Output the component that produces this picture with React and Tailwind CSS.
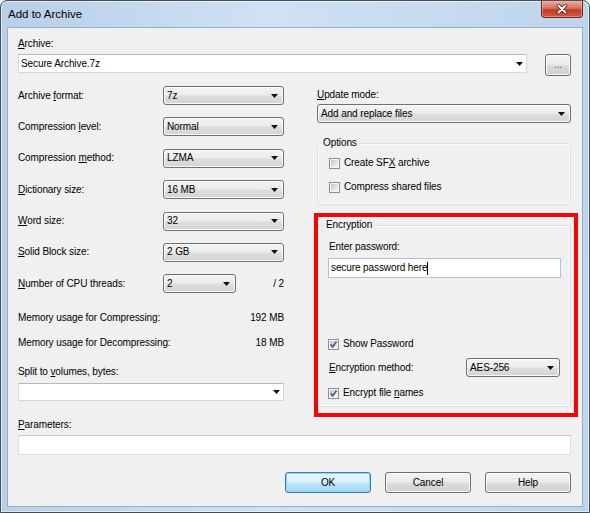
import React from "react";

const Arrow = () => (
  <svg width="7" height="4" viewBox="0 0 7 4" className="shrink-0">
    <path d="M0 0h7L3.5 4z" fill="#111" />
  </svg>
);

const U = ({ children }) => <span className="underline underline-offset-[1px]">{children}</span>;

const Select = ({ value, className = "" }) => (
  <div
    className={`flex items-center justify-between h-[19px] pl-[3px] pr-[5px] rounded-[3px] border border-[#707070] bg-[linear-gradient(#f3f3f3,#ececec_48%,#dedede_52%,#d3d3d3)] shadow-[inset_0_0_0_1px_#fafafa] ${className}`}
  >
    <span>{value}</span>
    <Arrow />
  </div>
);

const EditCombo = ({ value, className = "" }) => (
  <div
    className={`flex items-center justify-between pl-[2px] pr-[3px] bg-white border border-[#d5d8de] border-t-[#b5b9c1] ${className}`}
  >
    <span>{value}</span>
    <Arrow />
  </div>
);

const Button = ({ children, primary, className = "" }) => (
  <div
    className={
      primary
        ? `flex items-center justify-center rounded-[3px] border border-[#3c7fb1] bg-[linear-gradient(#eaf6fd,#d9f0fc_48%,#bee6fd_52%,#a7d9f5)] shadow-[inset_0_0_0_1px_#8fd3f3] ${className}`
        : `flex items-center justify-center rounded-[3px] border border-[#707070] bg-[linear-gradient(#f3f3f3,#ebebeb_48%,#dddddd_52%,#cfcfcf)] shadow-[inset_0_0_0_1px_#fbfbfb] ${className}`
    }
  >
    {children}
  </div>
);

const Check = ({ checked, children }) => (
  <div className="flex items-center gap-[4px] h-[14px]">
    <div className="relative w-[11px] h-[11px] border border-[#8e8f8f] bg-[#f6f6f6] p-[1px]">
      <div className="w-full h-full bg-[linear-gradient(135deg,#c3c8cf,#f4f4f4)]" />
      {checked && (
        <svg className="absolute left-0 top-0" width="9" height="9" viewBox="0 0 9 9">
          <path d="M1.6 4.3 3.6 6.8 7.6 1.4" fill="none" stroke="#4c5f88" strokeWidth="1.7" />
        </svg>
      )}
    </div>
    <span>{children}</span>
  </div>
);

const Group = ({ title, titleLeft, className = "", children }) => (
  <div className={`relative rounded-[3px] border border-[#d5dfe5] shadow-[inset_0_0_0_1px_#fbfbfb] ${className}`}>
    <span className={`absolute -top-[8px] ${titleLeft} px-[2px] bg-[#f0f0f0] leading-[14px]`}>{title}</span>
    {children}
  </div>
);

const rows = [
  [<>Archive <U>f</U>ormat:</>, "7z"],
  [<>Compression <U>l</U>evel:</>, "Normal"],
  [<>Compression <U>m</U>ethod:</>, "LZMA"],
  [<><U>D</U>ictionary size:</>, "16 MB"],
  [<><U>W</U>ord size:</>, "32"],
  [<><U>S</U>olid Block size:</>, "2 GB"],
];

export default function App() {
  return (
    <div className="w-[590px] h-[514px] bg-white font-['Liberation_Sans',Arial,sans-serif] text-[10px] leading-[14px] tracking-[-0.1px] text-black">
      <div className="relative flex flex-col w-[590px] h-[513px] rounded-t-[7px] border border-[#4a4f54] bg-[linear-gradient(90deg,#b8cfe8,#cfe2f4_45%,#c6dbef_75%,#bdd4ec)] shadow-[inset_0_0_0_1px_rgba(255,255,255,0.55)]">
        {/* title bar */}
        <div className="h-[26px] pl-[7px] flex items-center text-[11.5px] tracking-normal">Add to Archive</div>
        <div className="absolute top-0 right-[6px] w-[42px] h-[17px] flex items-center justify-center rounded-b-[4px] border border-t-0 border-[#6b2a22] bg-[linear-gradient(#e9ab9e,#d8735e_45%,#c2362a_55%,#d45a40)] shadow-[inset_0_0_0_1px_rgba(255,200,190,0.45)]">
          <svg width="12" height="10" viewBox="0 0 12 10">
            <path d="M2.5 1.5 9.5 8.5M9.5 1.5 2.5 8.5" stroke="#4a1c16" strokeWidth="3.6" strokeLinecap="round" />
            <path d="M2.5 1.5 9.5 8.5M9.5 1.5 2.5 8.5" stroke="#fff" strokeWidth="2" strokeLinecap="round" />
          </svg>
        </div>

        {/* client area */}
        <div className="relative flex-1 mx-[6px] mb-[5px] border border-[#98aec6] bg-[#f0f0f0] pl-[10px] pr-[11px] pt-[9px]">
          <div className="h-[14px]"><U>A</U>rchive:</div>
          <div className="flex items-start mt-[3px] gap-[18px]">
            <EditCombo value="Secure Archive.7z" className="w-[509px] h-[19px]" />
            <Button className="w-[26px] h-[22px] text-[#555]">...</Button>
          </div>

          <div className="flex mt-[10px] gap-[33px]">
            {/* left column */}
            <div className="w-[266px] flex flex-col">
              <div className="flex flex-col gap-[12.4px]">
                {rows.map(([label, value], i) => (
                  <div key={i} className="flex items-center h-[19px]">
                    <div className="w-[145px]">{label}</div>
                    <Select value={value} className="w-[121px]" />
                  </div>
                ))}
                <div className="flex items-center h-[19px]">
                  <div className="w-[145px]"><U>N</U>umber of CPU threads:</div>
                  <Select value="2" className="w-[73px]" />
                  <div className="flex-1 text-right">/ 2</div>
                </div>
              </div>
              <div className="flex justify-between h-[14px] mt-[17.6px]">
                <span>Memory usage for Compressing:</span>
                <span>192 MB</span>
              </div>
              <div className="flex justify-between h-[14px] mt-[11px]">
                <span>Memory usage for Decompressing:</span>
                <span>18 MB</span>
              </div>
              <div className="h-[14px] mt-[15px]">Split to <U>v</U>olumes, bytes:</div>
              <EditCombo value="" className="mt-[4px] h-[18px] w-full" />
            </div>

            {/* right column */}
            <div className="w-[254px] flex flex-col">
              <div className="h-[14px] mt-[2px]"><U>U</U>pdate mode:</div>
              <Select value="Add and replace files" className="mt-[2px] w-full" />

              <Group title="Options" titleLeft="left-[3px]" className="mt-[20px] h-[62px] pt-[12px] pl-[11px]">
                <Check>Create SF<U>X</U> archive</Check>
                <div className="mt-[10px]">
                  <Check>Compress shared files</Check>
                </div>
              </Group>

              <Group title="Encryption" titleLeft="left-[6px]" className="mt-[20px] h-[182px] pt-[14px] pl-[10px]">
                <div className="h-[14px] pl-[1px]">Enter password:</div>
                <div className="mt-[4px] w-[233px] h-[20px] flex items-center pl-[2px] bg-white border border-[#a9c3dd]">
                  <span>secure password here</span>
                  <span className="w-[1px] h-[13px] bg-black" />
                </div>
                <div className="mt-[59px]">
                  <Check checked>Show Password</Check>
                </div>
                <div className="mt-[7px] flex items-center h-[19px] w-[232px]">
                  <div className="flex-1 pl-[1px]"><U>E</U>ncryption method:</div>
                  <Select value="AES-256" className="w-[94px]" />
                </div>
                <div className="mt-[9px]">
                  <Check checked>Encrypt file <U>n</U>ames</Check>
                </div>
              </Group>
            </div>
          </div>

          <div className="h-[14px] mt-[11px]"><U>P</U>arameters:</div>
          <div className="mt-[3px] h-[20px] bg-white border border-[#dadde3] border-t-[#c3c7ce]" />

          <div className="flex justify-end gap-[14px] mt-[17px]">
            <Button primary className="w-[86px] h-[21px]">OK</Button>
            <Button className="w-[86px] h-[21px]">Cancel</Button>
            <Button className="w-[86px] h-[21px]">Help</Button>
          </div>

          {/* red annotation frame */}
          <div className="absolute left-[306px] top-[185px] w-[264px] h-[204px] border-[4px] border-[#ff0000] pointer-events-none" />
        </div>
      </div>
    </div>
  );
}
